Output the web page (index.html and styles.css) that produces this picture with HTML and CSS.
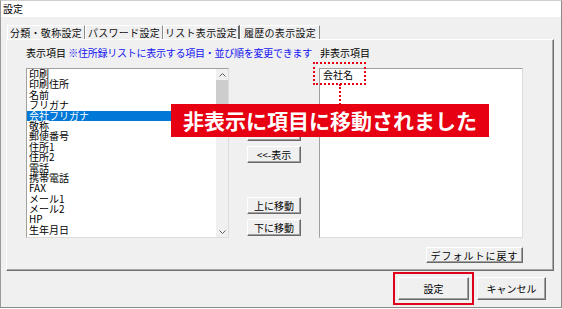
FILE: index.html
```html
<!doctype html>
<html lang="ja">

<head>
    <meta charset="utf-8">
    <title>設定</title>
    <link rel="stylesheet" href="styles.css">
</head>

<body>
    <div class="window">
        <div class="titlebar">設定</div>

        <div class="client">
            <div class="tabs">
                <div class="tab t1">分類・敬称設定</div>
                <div class="tab t2">パスワード設定</div>
                <div class="tab t3 active">リスト表示設定</div>
                <div class="tab t4">履歴の表示設定</div>
            </div>

            <div class="panel">
                <div class="head">
                    <div class="head-left">表示項目 <span class="note">※住所録リストに表示する項目・並び順を変更できます</span></div>
                    <div class="head-right">非表示項目</div>
                </div>

                <div class="lists">
                    <div class="listbox left">
                        <ul class="items">
                            <li>印刷</li>
                            <li>印刷住所</li>
                            <li>名前</li>
                            <li>フリガナ</li>
                            <li class="selected">会社フリガナ</li>
                            <li>敬称</li>
                            <li>郵便番号</li>
                            <li>住所1</li>
                            <li>住所2</li>
                            <li>電話</li>
                            <li>携帯電話</li>
                            <li>FAX</li>
                            <li>メール1</li>
                            <li>メール2</li>
                            <li>HP</li>
                            <li>生年月日</li>
                        </ul>
                        <div class="scrollbar">
                            <div class="arrow">
                                <svg width="7" height="4" viewBox="0 0 7 4"><polyline points="0.5,3.5 3.5,0.5 6.5,3.5" fill="none" stroke="#606060" stroke-width="1"/></svg>
                            </div>
                            <div class="thumb"></div>
                            <div class="track"></div>
                            <div class="arrow">
                                <svg width="7" height="4" viewBox="0 0 7 4"><polyline points="0.5,0.5 3.5,3.5 6.5,0.5" fill="none" stroke="#606060" stroke-width="1"/></svg>
                            </div>
                        </div>
                    </div>

                    <div class="movebtns">
                        <!-- label hidden behind the callout banner -->
                        <button class="btn mv first" aria-label="非表示-&gt;&gt;"></button>
                        <button class="btn mv">&lt;&lt;-表示</button>
                        <button class="btn mv third">上に移動</button>
                        <button class="btn mv">下に移動</button>
                    </div>

                    <div class="listbox right">
                        <ul class="items">
                            <li>会社名</li>
                        </ul>
                    </div>
                </div>

                <div class="panel-foot">
                    <button class="btn reset">デフォルトに戻す</button>
                </div>
            </div>

            <div class="dialog-foot">
                <button class="btn big ok">設定</button>
                <button class="btn big cancel">キャンセル</button>
            </div>
        </div>

        <!-- annotation overlay -->
        <div class="callout-box"></div>
        <div class="callout-line"></div>
        <div class="banner">非表示に項目に移動されました</div>
    </div>
</body>

</html>
```

FILE: styles.css
```css
* {
    box-sizing: border-box;
}

body {
    margin: 0;
    background: #ffffff;
    font-family: "Noto Sans CJK JP", "Noto Sans", sans-serif;
    font-size: 10px;
    color: #000;
}

.window {
    position: relative;
    width: 562px;
    height: 308px;
    background: #f0f0f0;
    border-left: 1px solid #9a9a9a;
    border-right: 1px solid #8a8a8a;
    border-bottom: 1px solid #8a8a8a;
    border-top: 1px solid #cfcfcf;
}

.titlebar {
    height: 16px;
    background: #fff;
    line-height: 15px;
    padding-left: 2px;
    font-size: 10px;
}

.client {
    display: flex;
    flex-direction: column;
}

.tabs {
    display: flex;
    margin-top: 8px;
    padding-left: 6px;
    height: 14px;
}

.tab {
    height: 14px;
    line-height: 13px;
    font-size: 10px;
    text-align: center;
    border-top: 1px solid #fff;
    border-left: 1px solid #fff;
    border-right: 1px solid #8a8a8a;
    white-space: nowrap;
    color: #111;
    letter-spacing: 0.3px;
}

.t1 { width: 78px; }
.t2 { width: 78px; }
.t3 { width: 77px; border-right: 2px solid #6a6a6a; }
.t4 { width: 80px; }

.panel {
    width: 548px;
    height: 232px;
    margin-left: 5px;
    padding: 7px 30px 7px 19px;
    border: 1px solid;
    border-color: #fff #6e6e6e #6e6e6e #fff;
    box-shadow: inset -1px -1px 0 #a8a8a8;
    display: flex;
    flex-direction: column;
}

.head {
    display: flex;
    height: 12px;
    line-height: 12px;
    white-space: nowrap;
}

.head-left {
    width: 294px;
    flex-shrink: 0;
}

.note {
    color: #1414f0;
    letter-spacing: -0.25px;
}

.lists {
    display: flex;
    margin-top: 9px;
    height: 170px;
}

.listbox {
    height: 170px;
    background: #fff;
    border: 1px solid;
    border-color: #a0a0a0 #dcdcdc #dcdcdc #a0a0a0;
    display: flex;
}

.listbox.left {
    width: 203px;
}

.listbox.right {
    width: 204px;
    margin-left: 18px;
}

.items {
    list-style: none;
    margin: 0;
    padding: 0;
    flex: 1;
}

.items li {
    height: 10.4px;
    line-height: 10.4px;
    padding-left: 2px;
    white-space: nowrap;
}

.listbox.right .items li {
    padding-left: 3px;
    line-height: 12px;
    height: 12px;
}

.items li.selected {
    background: #0078d7;
    color: #fff;
}

.scrollbar {
    width: 12px;
    background: #f0f0f0;
    display: flex;
    flex-direction: column;
}

.arrow {
    height: 11px;
    display: flex;
    align-items: center;
    justify-content: center;
}

.thumb {
    height: 48px;
    background: #cdcdcd;
}

.track {
    flex: 1;
}

.movebtns {
    width: 54px;
    margin-left: 18px;
    display: flex;
    flex-direction: column;
}

.btn {
    font-family: "Noto Sans CJK JP", "Noto Sans", sans-serif;
    font-size: 10px;
    color: #000;
    background: #f0f0f0;
    border: 1px solid;
    border-color: #fff #696969 #696969 #fff;
    box-shadow: inset -1px -1px 0 #a0a0a0;
    padding: 0;
    white-space: nowrap;
}

.mv {
    height: 17px;
    margin-top: 5px;
}

.mv.first {
    margin-top: 56px;
}

.mv.third {
    margin-top: 34px;
}

.panel-foot {
    display: flex;
    justify-content: flex-end;
    margin-top: 9px;
}

.reset {
    width: 97px;
    height: 16px;
    letter-spacing: 1px;
}

.dialog-foot {
    display: flex;
    justify-content: flex-end;
    gap: 8px;
    margin-top: 6px;
    padding-right: 15px;
}

.big {
    height: 23px;
}

.ok {
    width: 71px;
    outline: 2px solid #e0001b;
    outline-offset: 3px;
}

.cancel {
    width: 69px;
}

/* annotation */
.callout-box {
    position: absolute;
    left: 312px;
    top: 61px;
    width: 53px;
    height: 23px;
    border: 2px dotted #e60012;
}

.callout-line {
    position: absolute;
    left: 338px;
    top: 83px;
    height: 21px;
    border-left: 2px dotted #e60012;
}

.banner {
    position: absolute;
    left: 170px;
    top: 103px;
    width: 318px;
    height: 33px;
    background: #e60012;
    color: #fff;
    font-weight: 700;
    font-size: 21px;
    line-height: 33px;
    text-align: center;
    white-space: nowrap;
}
```
